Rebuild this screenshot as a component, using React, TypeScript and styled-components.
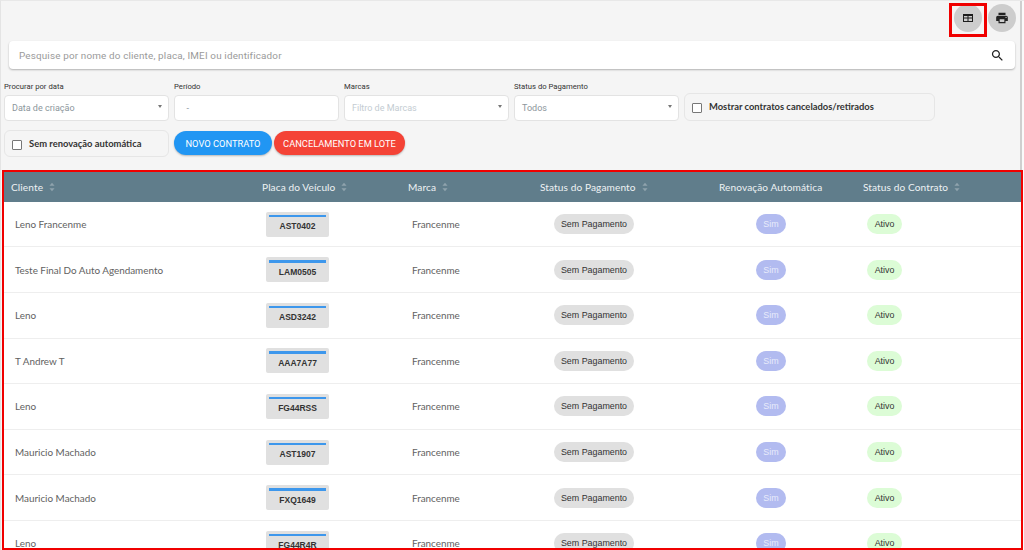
import React, { FC } from "react";
import styled, { createGlobalStyle } from "styled-components";

const GlobalStyle = createGlobalStyle`
  html, body { margin: 0; padding: 0; height: 100%; overflow: hidden; }
  body { background: #f5f5f5; font-family: Roboto, sans-serif; }
`;

const Page = styled.div`
  width: 1024px;
  height: 550px;
  overflow: hidden;
  box-sizing: border-box;
  border-left: 1px solid #e4e4e4;
  border-top: 1px solid #e8e8e8;
  display: flex;
  flex-direction: column;
  background: linear-gradient(
    to right,
    #f5f5f5 1019px,
    #cfcfcf 1019px,
    #cfcfcf 1021px,
    #fafafa 1021px
  );
`;

const TopActions = styled.div`
  display: flex;
  justify-content: flex-end;
  gap: 6px;
  height: 40px;
  padding: 3px 8px 0 0;
  box-sizing: border-box;
`;

const RoundButton = styled.button<{ $marked?: boolean }>`
  width: 28px;
  height: 28px;
  padding: 0;
  border: none;
  border-radius: 50%;
  background: #cdcdcd;
  display: flex;
  align-items: center;
  justify-content: center;
  position: relative;
  ${({ $marked }) =>
    $marked &&
    `&::after {
      content: "";
      position: absolute;
      left: -5px;
      top: -1px;
      width: 32px;
      height: 28px;
      border: 3px solid #f00000;
    }`}
`;

const SearchBar = styled.div`
  margin-left: 8px;
  width: 1006px;
  height: 28px;
  flex: none;
  background: #fff;
  border-radius: 4px;
  box-shadow: 0 1px 2px rgba(0, 0, 0, 0.28);
  display: flex;
  align-items: center;
  justify-content: space-between;
  padding: 0 10px 0 10px;
  box-sizing: border-box;
  font-size: 9.9px;
  color: #9a9a9a;
  letter-spacing: 0.16px;
`;

const Filters = styled.div`
  display: flex;
  gap: 5px;
  margin: 12px 0 0 3px;
  height: 41px;
`;

const Field = styled.div`
  width: 165px;
  display: flex;
  flex-direction: column;
`;

const Label = styled.label`
  font-size: 7.7px;
  line-height: 11px;
  color: #333;
  height: 14px;
`;

const InputBox = styled.div<{ $muted?: boolean }>`
  height: 26px;
  box-sizing: border-box;
  background: #fff;
  border: 1px solid #e3e3e3;
  border-radius: 4px;
  padding: 0 7px;
  display: flex;
  align-items: center;
  justify-content: space-between;
  font-size: 9px;
  color: ${({ $muted }) => ($muted ? "#c4ccd2" : "#8c969c")};
`;

const Caret = styled.span`
  width: 0;
  height: 0;
  border-left: 2.5px solid transparent;
  border-right: 2.5px solid transparent;
  border-top: 3px solid #777;
  margin: -4px -1px 0 0;
`;

const CheckPanel = styled.div<{ $width: number; $top: number; $height: number }>`
  width: ${({ $width }) => $width}px;
  height: ${({ $height }) => $height}px;
  margin-top: ${({ $top }) => $top}px;
  box-sizing: border-box;
  border: 1px solid #e6e6e6;
  border-radius: 6px;
  display: flex;
  align-items: flex-start;
  gap: 7px;
  padding: 7px;
  font-family: Lato, sans-serif;
  font-size: 9.4px;
  font-weight: 700;
  line-height: 11px;
  color: #333;
`;

const CheckBox = styled.span`
  width: 8px;
  height: 8px;
  margin-top: 2px;
  flex: none;
  border: 1px solid #777;
  border-radius: 1px;
  background: #fff;
`;

const ActionRow = styled.div`
  display: flex;
  align-items: flex-start;
  gap: 5px;
  margin: 8px 0 0 3px;
  height: 28px;
`;

const PillButton = styled.button<{ $color: string; $width: number }>`
  width: ${({ $width }) => $width}px;
  height: 24px;
  margin-top: 1px;
  margin-right: ${({ $width }) => ($width < 100 ? -3 : 0)}px;
  padding: 0;
  border: none;
  border-radius: 12px;
  background: ${({ $color }) => $color};
  color: #fff;
  font-family: Roboto, sans-serif;
  font-size: 9.3px;
  box-shadow: 0 1px 2px rgba(0, 0, 0, 0.25);
`;

const TableFrame = styled.div`
  margin: 12px 0 0 1px;
  flex: none;
  height: 380px;
  width: 1021px;
  box-sizing: border-box;
  border: 2px solid #f00000;
  overflow: hidden;
  background: #fff;
`;

const columns = "251px 146px 132px 179px 144px 1fr";

const HeaderRow = styled.div`
  display: grid;
  grid-template-columns: ${columns};
  height: 29.8px;
  background: #607d8b;
  align-items: center;
`;

const HeaderCell = styled.div`
  padding-left: 7px;
  display: flex;
  align-items: center;
  gap: 6px;
  font-family: Lato, sans-serif;
  font-size: 10.1px;
  letter-spacing: 0.1px;
  color: #eef2f4;
`;

const Row = styled.div`
  display: grid;
  grid-template-columns: ${columns};
  height: 45.6px;
  box-sizing: border-box;
  border-bottom: 1px solid #eeeeee;
  align-items: center;
`;

const Cell = styled.div<{ $pad?: number }>`
  padding-left: ${({ $pad }) => $pad ?? 11}px;
  font-family: Lato, sans-serif;
  font-size: 9.9px;
  color: #616161;
`;

const Plate = styled.div`
  width: 63px;
  height: 25px;
  box-sizing: border-box;
  padding-top: 3px;
  background: #e0e0e0;
  border-radius: 2px;
  text-align: center;
  font-family: "Liberation Sans", sans-serif;
  font-size: 8.5px;
  font-weight: 700;
  color: #333;
  &::before {
    content: "";
    display: block;
    height: 2.5px;
    margin: 0 3px 4px;
    background: #3d97ec;
  }
`;

const Badge = styled.span<{ $bg: string; $fg: string; $width: number }>`
  display: inline-flex;
  align-items: center;
  justify-content: center;
  width: ${({ $width }) => $width}px;
  height: 20px;
  border-radius: 10px;
  background: ${({ $bg }) => $bg};
  color: ${({ $fg }) => $fg};
  font-family: "Liberation Sans", sans-serif;
  font-size: 8.9px;
`;

const SortIcon: FC = () => (
  <svg width="6" height="10" viewBox="0 0 7 11" fill="#8fa3ad">
    <path d="M3.5 0.5 L6.5 4 H0.5 Z M3.5 10.5 L6.5 7 H0.5 Z" />
  </svg>
);

const TableIcon: FC = () => (
  <svg width="12" height="12" viewBox="0 0 12 12" fill="#1c1c1c">
    <path
      fillRule="evenodd"
      d="M1 2h10v8H1zM2 4v1.6h3.5V4zM6.5 4v1.6H10V4zM2 6.6V9h3.5V6.6zM6.5 6.6V9H10V6.6z"
    />
  </svg>
);

const PrintIcon: FC = () => (
  <svg width="14" height="14" viewBox="0 0 24 24" fill="#222">
    <path d="M19 8H5c-1.66 0-3 1.34-3 3v6h4v4h12v-4h4v-6c0-1.66-1.34-3-3-3zm-3 11H8v-5h8v5zm3-7c-.55 0-1-.45-1-1s.45-1 1-1 1 .45 1 1-.45 1-1 1zm-1-9H6v4h12V3z" />
  </svg>
);

const SearchIcon: FC = () => (
  <svg width="15" height="15" viewBox="0 0 24 24" fill="#222">
    <path d="M15.5 14h-.79l-.28-.27C15.41 12.59 16 11.11 16 9.5 16 5.91 13.09 3 9.5 3S3 5.91 3 9.5 5.91 16 9.5 16c1.61 0 3.09-.59 4.23-1.57l.27.28v.79l5 4.99L20.49 19l-4.99-5zm-6 0C7.01 14 5 11.99 5 9.5S7.01 5 9.5 5 14 7.01 14 9.5 11.99 14 9.5 14z" />
  </svg>
);

const contracts = [
  { client: "Leno Francenme", plate: "AST0402" },
  { client: "Teste Final Do Auto Agendamento", plate: "LAM0505" },
  { client: "Leno", plate: "ASD3242" },
  { client: "T Andrew T", plate: "AAA7A77" },
  { client: "Leno", plate: "FG44RSS" },
  { client: "Mauricio Machado", plate: "AST1907" },
  { client: "Mauricio Machado", plate: "FXQ1649" },
  { client: "Leno", plate: "FG44R4R" }
];

const headers = [
  { title: "Cliente", sortable: true },
  { title: "Placa do Veículo", sortable: true },
  { title: "Marca", sortable: true },
  { title: "Status do Pagamento", sortable: true },
  { title: "Renovação Automática", sortable: false },
  { title: "Status do Contrato", sortable: true }
];

export default function App() {
  return (
    <Page>
      <GlobalStyle />
      <TopActions>
        <RoundButton $marked>
          <TableIcon />
        </RoundButton>
        <RoundButton>
          <PrintIcon />
        </RoundButton>
      </TopActions>
      <SearchBar>
        Pesquise por nome do cliente, placa, IMEI ou identificador
        <SearchIcon />
      </SearchBar>
      <Filters>
        <Field>
          <Label>Procurar por data</Label>
          <InputBox>
            Data de criação
            <Caret />
          </InputBox>
        </Field>
        <Field>
          <Label>Período</Label>
          <InputBox>&nbsp;&nbsp;-</InputBox>
        </Field>
        <Field>
          <Label>Marcas</Label>
          <InputBox $muted>
            Filtro de Marcas
            <Caret />
          </InputBox>
        </Field>
        <Field>
          <Label>Status do Pagamento</Label>
          <InputBox>
            Todos
            <Caret />
          </InputBox>
        </Field>
        <CheckPanel $width={251} $top={12} $height={28}>
          <CheckBox />
          Mostrar contratos cancelados/retirados
        </CheckPanel>
      </Filters>
      <ActionRow>
        <CheckPanel $width={165} $top={0} $height={27}>
          <CheckBox />
          Sem renovação automática
        </CheckPanel>
        <PillButton $color="#2196f3" $width={98}>
          NOVO CONTRATO
        </PillButton>
        <PillButton $color="#f44336" $width={131}>
          CANCELAMENTO EM LOTE
        </PillButton>
      </ActionRow>
      <TableFrame>
        <HeaderRow>
          {headers.map(h => (
            <HeaderCell key={h.title}>
              {h.title}
              {h.sortable && <SortIcon />}
            </HeaderCell>
          ))}
        </HeaderRow>
        {contracts.map((c, i) => (
          <Row key={i}>
            <Cell>{c.client}</Cell>
            <Cell>
              <Plate>{c.plate}</Plate>
            </Cell>
            <Cell>Francenme</Cell>
            <Cell $pad={21}>
              <Badge $bg="#e0e0e0" $fg="#333" $width={80}>
                Sem Pagamento
              </Badge>
            </Cell>
            <Cell $pad={44}>
              <Badge $bg="#b2bbf0" $fg="#e8ebfb" $width={30}>
                Sim
              </Badge>
            </Cell>
            <Cell>
              <Badge $bg="#dcfcd6" $fg="#333" $width={35}>
                Ativo
              </Badge>
            </Cell>
          </Row>
        ))}
      </TableFrame>
    </Page>
  );
}
